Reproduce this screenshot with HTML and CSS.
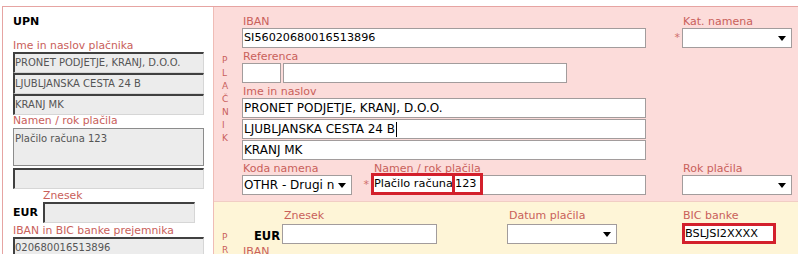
FILE: index.html
```
<!DOCTYPE html>
<html lang="sl">
<head>
<meta charset="utf-8">
<title>UPN</title>
<link rel="stylesheet" href="styles.css">
</head>
<body>
<div class="upn">
  <aside class="left">
    <div class="upn-title">UPN</div>
    <div class="llabel first">Ime in naslov plačnika</div>
    <div class="lfield">PRONET PODJETJE, KRANJ, D.O.O.</div>
    <div class="lfield">LJUBLJANSKA CESTA 24 B</div>
    <div class="lfield">KRANJ MK</div>
    <div class="llabel">Namen / rok plačila</div>
    <div class="larea">Plačilo računa 123</div>
    <div class="lfield gap2"></div>
    <div class="llabel indent">Znesek</div>
    <div class="leur-row">
      <span class="leur">EUR</span>
      <div class="lfield amount"></div>
    </div>
    <div class="llabel gap2">IBAN in BIC banke prejemnika</div>
    <div class="lfield">020680016513896</div>
  </aside>
  <div class="main">
    <section class="payer">
      <div class="vert payer-vert">P<br>L<br>A<br>Č<br>N<br>I<br>K</div>
      <div class="fields">
        <div class="row">
          <div class="group w404">
            <div class="label">IBAN</div>
            <div class="field digits">SI56020680016513896</div>
          </div>
          <div class="star w36">*</div>
          <div class="group w110">
            <div class="label">Kat. namena</div>
            <div class="field select"><span class="val"></span><span class="arrow"></span></div>
          </div>
        </div>
        <div class="group mt3">
          <div class="label">Referenca</div>
          <div class="ref-row">
            <div class="field w39"></div>
            <div class="field w284"></div>
          </div>
        </div>
        <div class="group w404 mt3">
          <div class="label">Ime in naslov</div>
          <div class="field">PRONET PODJETJE, KRANJ, D.O.O.</div>
          <div class="field mt1">LJUBLJANSKA CESTA 24 B<span class="caret"></span></div>
          <div class="field mt1">KRANJ MK</div>
        </div>
        <div class="row mt3">
          <div class="group w110">
            <div class="label">Koda namena</div>
            <div class="field select"><span class="val">OTHR - Drugi n</span><span class="arrow"></span></div>
          </div>
          <div class="star w19">*</div>
          <div class="group w275">
            <div class="label namen">Namen / rok plačila</div>
            <div class="field hlfield"><span class="hl hl1">Plačilo računa</span><span class="hl hl2">123</span></div>
          </div>
          <div class="star w36"></div>
          <div class="group w110">
            <div class="label">Rok plačila</div>
            <div class="field select"><span class="val"></span><span class="arrow"></span></div>
          </div>
        </div>
      </div>
    </section>
    <section class="payee">
      <div class="vert payee-vert">P<br>R</div>
      <div class="fields payee-fields">
        <div class="row">
          <div class="eur">EUR</div>
          <div class="group w155">
            <div class="label pl2">Znesek</div>
            <div class="field mt2"></div>
          </div>
          <div class="spacer70"></div>
          <div class="group w110">
            <div class="label pl2">Datum plačila</div>
            <div class="field select mt2"><span class="val"></span><span class="arrow"></span></div>
          </div>
          <div class="spacer65"></div>
          <div class="group w94">
            <div class="label">BIC banke</div>
            <div class="field bic">BSLJSI2XXXX</div>
          </div>
        </div>
        <div class="label mt2">IBAN</div>
      </div>
    </section>
  </div>
</div>
</body>
</html>
```
FILE: styles.css
```
html, body {
  margin: 0;
  padding: 0;
  background: #ffffff;
  overflow: hidden;
}
body {
  font-family: "DejaVu Sans", Verdana, sans-serif;
  width: 798px;
  height: 254px;
}
.upn {
  margin: 6px 0 0 2px;
  width: 830px;
  height: 300px;
  border: 1px solid #e6a4a2;
  display: flex;
}
.left {
  width: 210px;
  flex: none;
  box-sizing: border-box;
  padding: 9px 0 0 10px;
  background: #ffffff;
}
.upn-title {
  font-weight: bold;
  font-size: 11px;
  line-height: 12px;
  color: #000;
}
.llabel {
  font-size: 10.8px;
  line-height: 12px;
  color: #c9605a;
  white-space: nowrap;
}
.llabel.first { margin-top: 12px; }
.llabel.indent { padding-left: 30px; margin-top: 1px; }
.lfield {
  box-sizing: border-box;
  width: 191px;
  height: 21px;
  background: #ececec;
  border-top: 2px solid #404040;
  border-left: 2px solid #404040;
  border-right: 1px solid #d6d6d6;
  border-bottom: 1px solid #d6d6d6;
  font-size: 10px;
  line-height: 18px;
  color: #555555;
  white-space: nowrap;
  overflow: hidden;
}
.larea {
  box-sizing: border-box;
  width: 191px;
  height: 38px;
  margin-top: 1px;
  background: #ececec;
  border: 1px solid #8c8c8c;
  padding: 3px 0 0 1px;
  font-size: 10px;
  line-height: 14px;
  color: #555555;
}
.gap2 { margin-top: 2px; }
.leur-row {
  display: flex;
  align-items: center;
}
.leur {
  width: 30px;
  font-weight: bold;
  font-size: 11px;
  color: #000;
}
.lfield.amount { width: 152px; }

.main {
  flex: 1;
  border-left: 1px solid #efbcb6;
  display: flex;
  flex-direction: column;
}
.payer {
  background: #fcdcda;
  height: 194px;
  border-bottom: 1px solid #f1cdc4;
  display: flex;
}
.payee {
  background: #fef5d7;
  flex: 1;
  display: flex;
}
.vert {
  width: 28px;
  flex: none;
  box-sizing: border-box;
  padding-left: 8px;
  font-size: 9px;
  line-height: 13px;
  color: #c9605a;
}
.payer-vert { padding-top: 47px; }
.payee-vert { padding-top: 29px; }
.fields {
  padding-top: 9px;
}
.payee-fields { padding-top: 8px; }
.row {
  display: flex;
}
.group { flex: none; }
.label {
  font-size: 11px;
  line-height: 12px;
  color: #c9605a;
  padding-left: 1px;
  white-space: nowrap;
}
.label.namen { padding-left: 3px; }
.label.pl2 { padding-left: 2px; }
.field {
  box-sizing: border-box;
  height: 20px;
  background: #ffffff;
  border: 1px solid #a29c9c;
  font-size: 12px;
  line-height: 18px;
  padding-left: 1px;
  color: #000;
  white-space: nowrap;
  overflow: hidden;
  display: flex;
  align-items: center;
}
.field.digits { font-size: 11.2px; }
.select .val { flex: 1; overflow: hidden; }
.arrow {
  width: 0;
  height: 0;
  border-left: 4px solid transparent;
  border-right: 4px solid transparent;
  border-top: 5px solid #000;
  margin-right: 5px;
  flex: none;
}
.w404 { width: 404px; }
.w110 { width: 110px; }
.w275 { width: 275px; }
.w155 { width: 155px; }
.w94 { width: 94px; }
.w36 { width: 36px; }
.w19 { width: 19px; }
.w39 { width: 39px; }
.w284 { width: 284px; }
.mt1 { margin-top: 1px; }
.mt2 { margin-top: 2px; }
.mt3 { margin-top: 3px; }
.star {
  flex: none;
  box-sizing: border-box;
  text-align: right;
  padding-top: 12px;
  padding-right: 2px;
  font-size: 11px;
  line-height: 20px;
  color: #d0706c;
}
.ref-row {
  display: flex;
  gap: 2px;
}
.caret {
  display: inline-block;
  width: 1px;
  height: 15px;
  background: #000;
  margin-left: 1px;
}
.hlfield {
  overflow: visible;
  padding-left: 0;
  align-items: flex-start;
}
.hl {
  box-sizing: border-box;
  height: 22px;
  margin-top: -3px;
  border: 3px solid #d3202c;
  font-size: 11.3px;
  line-height: 16px;
  padding-left: 0;
  flex: none;
  overflow: hidden;
}
.hl1 { width: 84px; margin-left: -1px; }
.hl2 { width: 31px; margin-left: -3px; padding-left: 0; }
.eur {
  width: 40px;
  flex: none;
  box-sizing: border-box;
  text-align: right;
  padding-right: 2px;
  align-self: flex-end;
  font-weight: bold;
  font-size: 11.5px;
  line-height: 16px;
  color: #000;
}
.spacer70 { width: 70px; flex: none; }
.spacer65 { width: 65px; flex: none; }
.bic {
  height: 21px;
  margin-top: 1px;
  border: 3px solid #d3202c;
  font-size: 11.3px;
  padding-left: 0;
  line-height: 15px;
}
```
